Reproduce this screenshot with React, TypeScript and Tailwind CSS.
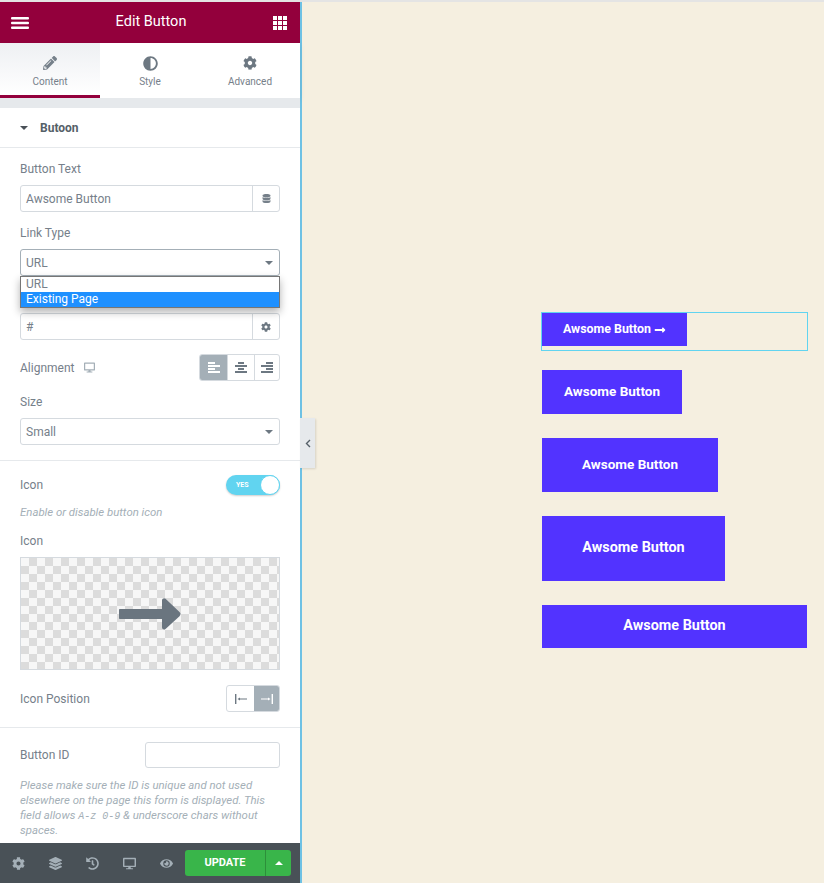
import { FaAdjust, FaCog, FaDatabase, FaDesktop, FaEye, FaHistory, FaLayerGroup, FaLongArrowAltRight, FaPencilAlt } from "react-icons/fa";
import { ReactNode } from "react";

const Label = ({ children, className = "" }: { children: ReactNode; className?: string }) => (
  <div className={`text-xs leading-[14px] text-[#76808a] ${className}`}>{children}</div>
);

const Caret = () => (
  <svg width="8" height="4" viewBox="0 0 8 4" className="fill-[#6d7882]">
    <path d="M0 0h8L4 4z" />
  </svg>
);

const AlignIcon = ({ rows, color }: { rows: [number, number][]; color: string }) => (
  <svg width="12" height="12" viewBox="0 0 12 12" fill={color}>
    {rows.map(([x, w], i) => (
      <rect key={i} x={x} y={i * 3} width={w} height="2" />
    ))}
  </svg>
);

const InputRow = ({ value, icon }: { value: string; icon: ReactNode }) => (
  <div className="flex h-[27px] rounded-[3px] border border-[#d5dadf] text-xs text-[#76808a]">
    <div className="flex flex-1 items-center pl-[5px]">{value}</div>
    <div className="flex w-[27px] items-center justify-center border-l border-[#d5dadf]">{icon}</div>
  </div>
);

const SelectRow = ({ value, dark }: { value: string; dark?: boolean }) => (
  <div className={`flex h-[27px] items-center justify-between rounded-[3px] border pl-[5px] pr-[6px] text-xs text-[#76808a] ${dark ? "border-[#a4afb7]" : "border-[#d5dadf]"}`}>
    <span>{value}</span>
    <Caret />
  </div>
);

const Tab = ({ icon, label, active }: { icon: ReactNode; label: string; active?: boolean }) => (
  <div className={`flex h-[55px] w-[100px] flex-col items-center pt-[12px] ${active ? "border-b-[3px] border-[#93003c] bg-gradient-to-b from-[#eef0f3] to-white" : ""}`}>
    <div className="flex h-[16px] items-center">{icon}</div>
    <span className="mt-[5px] text-[10px] leading-[12px] text-[#76808a]">{label}</span>
  </div>
);

const DemoButton = ({ className, children }: { className: string; children: ReactNode }) => (
  <div className={`flex items-center justify-center bg-[#5233ff] font-bold text-white ${className}`}>{children}</div>
);

export default function App() {
  return (
    <div className="flex h-[883px] w-[824px] flex-col overflow-hidden bg-[#f5efe0] font-['Roboto',sans-serif]">
      <div className="h-[2px] bg-[#e4e4e4]" />
      <div className="flex min-h-0 flex-1">
        <aside className="relative flex w-[302px] flex-col border-r-2 border-[#6ec1e4] bg-white">
          <header className="flex h-[41px] items-center justify-between bg-[#93003c] pl-[11px] pr-[13px] text-white">
            <svg width="18" height="12" viewBox="0 0 18 12" fill="white">
              <rect width="18" height="2.4" rx="1" />
              <rect y="4.8" width="18" height="2.4" rx="1" />
              <rect y="9.6" width="18" height="2.4" rx="1" />
            </svg>
            <span className="pb-px text-[14.5px] font-normal">Edit Button</span>
            <svg width="14" height="14" viewBox="0 0 14 14" fill="white">
              {[0, 5, 10].flatMap((y) =>
                [0, 5, 10].map((x) => <rect key={`${x}-${y}`} x={x} y={y} width="4" height="4" />)
              )}
            </svg>
          </header>

          <nav className="flex shadow-[0_2px_6px_rgba(0,0,0,0.08)]">
            <Tab active label="Content" icon={<FaPencilAlt size={14} color="#76808a" />} />
            <Tab label="Style" icon={<FaAdjust size={15} color="#6d7882" />} />
            <Tab label="Advanced" icon={<FaCog size={14} color="#6d7882" />} />
          </nav>
          <div className="h-[10px] bg-[#e6e9ec]" />

          <div className="flex h-[40px] items-center gap-[12px] border-b border-[#e6e9ec] pl-[20px]">
            <svg width="8" height="4" viewBox="0 0 8 4" className="fill-[#495157]">
              <path d="M0 0h8L4 4z" />
            </svg>
            <span className="text-xs font-bold text-[#556068]">Butoon</span>
          </div>

          <div className="relative flex min-h-0 flex-1 flex-col overflow-hidden px-[20px]">
            <Label className="mt-[14px]">Button Text</Label>
            <div className="mt-[9px]">
              <InputRow value="Awsome Button" icon={<FaDatabase size={9} color="#76808a" />} />
            </div>

            <Label className="mt-[14px]">Link Type</Label>
            <div className="relative mt-[9px]">
              <SelectRow dark value="URL" />
              <div className="absolute left-0 right-0 top-[27px] z-10 border border-[#767676] bg-white text-xs leading-[15px] text-[#76808a] shadow-[0_4px_8px_rgba(0,0,0,0.3)]">
                <div className="pl-[5px]">URL</div>
                <div className="bg-[#1e90ff] pl-[5px] text-white">Existing Page</div>
              </div>
            </div>

            <div className="mt-[37px]">
              <InputRow value="#" icon={<FaCog size={10} color="#6d7882" />} />
            </div>

            <div className="mt-[14px] flex items-center justify-between">
              <div className="flex items-center gap-[10px]">
                <Label>Alignment</Label>
                <FaDesktop size={11} color="#a4afb7" />
              </div>
              <div className="flex h-[27px] w-[81px] overflow-hidden rounded-[3px] border border-[#d5dadf]">
                <div className="flex w-[27px] items-center justify-center bg-[#a4afb7]">
                  <AlignIcon color="white" rows={[[0, 7], [0, 12], [0, 7], [0, 12]]} />
                </div>
                <div className="flex w-[27px] items-center justify-center border-l border-[#d5dadf]">
                  <AlignIcon color="#6d7882" rows={[[3, 6], [0, 12], [3, 6], [0, 12]]} />
                </div>
                <div className="flex flex-1 items-center justify-center border-l border-[#d5dadf]">
                  <AlignIcon color="#6d7882" rows={[[5, 7], [0, 12], [5, 7], [0, 12]]} />
                </div>
              </div>
            </div>

            <Label className="mt-[14px]">Size</Label>
            <div className="mt-[9px]">
              <SelectRow value="Small" />
            </div>

            <div className="-mx-[20px] mt-[15px] h-px bg-[#e6e9ec]" />

            <div className="mt-[14px] flex items-center justify-between">
              <Label>Icon</Label>
              <div className="flex h-[20px] w-[54px] items-center justify-between rounded-full bg-[#61d4f0] pl-[10px] shadow-[0_1px_2px_rgba(0,0,0,0.2)]">
                <span className="text-[7px] font-bold text-white">YES</span>
                <div className="h-[20px] w-[20px] rounded-full border border-[#61d4f0] bg-white" />
              </div>
            </div>
            <div className="mt-[10px] text-[11.4px] italic leading-[14px] text-[#a4afb7]">Enable or disable button icon</div>

            <Label className="mt-[15px]">Icon</Label>
            <div className="mt-[9px] flex h-[113px] items-center justify-center border border-[#d5dadf] bg-[repeating-conic-gradient(#dcdcdc_0_25%,#f7f7f7_0_50%)] bg-[length:16px_16px]">
              <svg width="62" height="32" viewBox="0 0 62 32" className="fill-[#6a757f]">
                <path d="M1 11h42V2.5c0-2 2.4-3 3.8-1.6L60.5 14a3 3 0 0 1 0 4.2L46.8 30.8c-1.4 1.4-3.8.4-3.8-1.6V21H1c-.6 0-1-.4-1-1v-8c0-.6.4-1 1-1z" />
              </svg>
            </div>

            <div className="mt-[15px] flex items-center justify-between">
              <Label>Icon Position</Label>
              <div className="flex h-[27px] w-[54px] overflow-hidden rounded-[3px] border border-[#d5dadf]">
                <div className="flex w-[27px] items-center justify-center">
                  <svg width="12" height="10" viewBox="0 0 12 10" fill="#6d7882">
                    <rect x="0" width="1.4" height="10" />
                    <path d="M2.5 5 5 3.4v1.1h7v1H5v1.1z" />
                  </svg>
                </div>
                <div className="flex flex-1 items-center justify-center bg-[#a4afb7]">
                  <svg width="12" height="10" viewBox="0 0 12 10" fill="white">
                    <rect x="10.6" width="1.4" height="10" />
                    <path d="M9.5 5 7 3.4v1.1H0v1h7v1.1z" />
                  </svg>
                </div>
              </div>
            </div>

            <div className="-mx-[20px] mt-[15px] h-px bg-[#e6e9ec]" />

            <div className="mt-[14px] flex items-center justify-between">
              <Label>Button ID</Label>
              <div className="h-[26px] w-[135px] rounded-[3px] border border-[#d5dadf]" />
            </div>
            <div className="mt-[10px] text-[11.4px] italic leading-[15px] text-[#a4afb7]">
              Please make sure the ID is unique and not used elsewhere on the page this form is displayed. This field allows <code className="font-['Liberation_Mono',monospace] text-[10px] leading-none">A-z 0-9</code> &amp; underscore chars without spaces.
            </div>
          </div>

          <footer className="flex h-[40px] items-center bg-[#495157] pl-[12px] pr-[9px]">
            <div className="flex flex-1 items-center gap-[24px] text-[#a4afb7]">
              <FaCog size={13} />
              <FaLayerGroup size={13} />
              <FaHistory size={13} />
              <FaDesktop size={13} />
              <FaEye size={13} />
            </div>
            <div className="flex h-[26px] w-[106px] overflow-hidden rounded-[3px] bg-[#39b54a] text-white">
              <div className="flex w-[81px] items-center justify-center border-r border-[#2d8f3a] pt-px text-[11px] font-bold">UPDATE</div>
              <div className="flex flex-1 items-center justify-center">
                <svg width="8" height="4" viewBox="0 0 8 4" fill="white">
                  <path d="M0 4h8L4 0z" />
                </svg>
              </div>
            </div>
          </footer>

          <div className="absolute left-[300px] top-[416px] z-20 flex h-[50px] w-[15px] items-center justify-center bg-[#e6e9ec] shadow-[1px_1px_2px_rgba(0,0,0,0.12)]">
            <svg width="6" height="9" viewBox="0 0 6 9" fill="none" stroke="#556068" strokeWidth="1.4">
              <path d="M5 1 1.5 4.5 5 8" />
            </svg>
          </div>
        </aside>

        <main className="flex flex-1 flex-col pl-[239px] pt-[310px]">
          <div className="h-[39px] w-[267px] border border-[#61d4f0]">
            <DemoButton className="h-[33px] w-[145px] gap-[3px] text-[12.4px]">
              Awsome Button <FaLongArrowAltRight size={12} />
            </DemoButton>
          </div>
          <div className="ml-px mt-[19px] flex flex-col items-start gap-[24px]">
            <DemoButton className="h-[44px] w-[140px] pb-[2px] text-[13.5px]">Awsome Button</DemoButton>
            <DemoButton className="h-[54px] w-[176px] pb-[2px] text-[13.5px]">Awsome Button</DemoButton>
            <DemoButton className="h-[65px] w-[183px] pb-px text-[14.4px]">Awsome Button</DemoButton>
            <DemoButton className="h-[43px] w-[265px] pb-px text-[14.4px]">Awsome Button</DemoButton>
          </div>
        </main>
      </div>
    </div>
  );
}
